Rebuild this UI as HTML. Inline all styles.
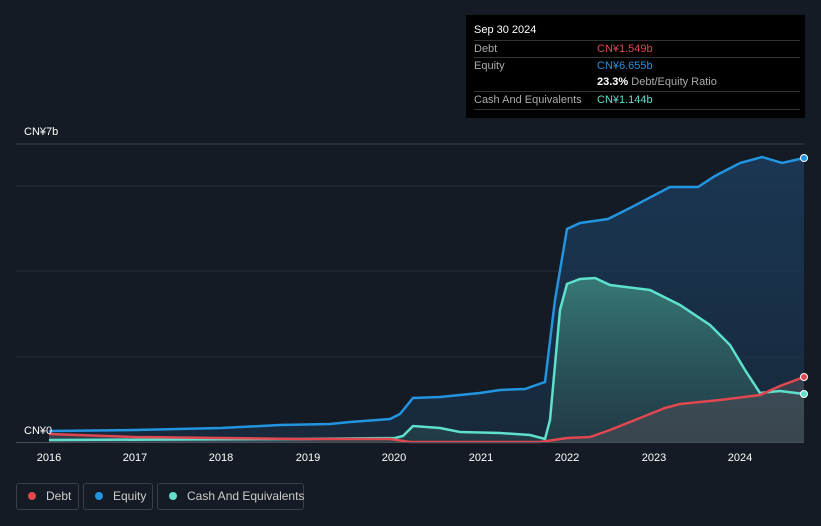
<!DOCTYPE html>
<html><head><style>
html,body{margin:0;width:821px;height:526px;background:#151b24;font-family:"Liberation Sans",sans-serif;overflow:hidden;position:relative}
.tt{position:absolute;left:466px;top:15px;width:339px;height:103px;background:#000;color:#fff;font-size:11px}
.row{position:absolute;left:8px;width:326px;border-top:1px solid #333;height:17px;line-height:17px}
.lg{position:absolute;top:483px;height:27px;border:1px solid #3a3f48;border-radius:3px;color:#ccc;font-size:12px;line-height:25px;box-sizing:border-box;white-space:nowrap}
.dot{display:inline-block;width:8px;height:8px;border-radius:50%;margin:0 10px 0 11px;vertical-align:0}
</style></head><body>
<svg width="821" height="526" style="position:absolute;left:0;top:0">
<defs>
<linearGradient id="ge" x1="0" y1="0" x2="0" y2="1"><stop offset="0" stop-color="#1b3d5e" stop-opacity=".8"/><stop offset="1" stop-color="#1b3d5e" stop-opacity=".4"/></linearGradient>
<linearGradient id="gc" x1="0" y1="0" x2="0" y2="1"><stop offset="0" stop-color="#3e8a80" stop-opacity=".8"/><stop offset="1" stop-color="#2a4c50" stop-opacity=".5"/></linearGradient>
</defs>
<line x1="16" y1="144" x2="804" y2="144" stroke="#3a3f48"/>
<line x1="16" y1="186" x2="804" y2="186" stroke="#262c36"/>
<line x1="16" y1="271" x2="804" y2="271" stroke="#262c36"/>
<line x1="16" y1="357" x2="804" y2="357" stroke="#262c36"/>
<path d="M49,431 L135,430 221,428 280,425 330,424 350,422 390,419 400,414 413,398 440,397 480,393 500,390 525,389 545,382 555,300 567,229 580,223 608,219 630,208 670,187 698,187 715,176 740,163 762,157 782,163 804,158 L804,442 49,442Z" fill="url(#ge)"/>
<path d="M49,440 L300,439 395,438 403,436 413,426 440,428 460,432 500,433 530,435 545,439 550,420 560,310 567,284 580,279 595,278 610,285 650,290 680,305 710,325 730,345 745,370 760,393 780,391 804,394 L804,442 49,442Z" fill="url(#gc)"/>
<path d="M49,434 L135,437 221,438 300,439 390,439 410,442 540,442 567,438 590,437 610,430 640,418 665,408 680,404 720,400 760,395 780,386 804,377 L804,442 49,442Z" fill="#4a4d57" fill-opacity=".6"/>
<path d="M49,431 L135,430 221,428 280,425 330,424 350,422 390,419 400,414 413,398 440,397 480,393 500,390 525,389 545,382 555,300 567,229 580,223 608,219 630,208 670,187 698,187 715,176 740,163 762,157 782,163 804,158" fill="none" stroke="#2394df" stroke-width="2.5"/>
<path d="M49,440 L300,439 395,438 403,436 413,426 440,428 460,432 500,433 530,435 545,439 550,420 560,310 567,284 580,279 595,278 610,285 650,290 680,305 710,325 730,345 745,370 760,393 780,391 804,394" fill="none" stroke="#5ee0cc" stroke-width="2.5"/>
<path d="M49,434 L135,437 221,438 300,439 390,439 410,442 540,442 567,438 590,437 610,430 640,418 665,408 680,404 720,400 760,395 780,386 804,377" fill="none" stroke="#e0474f" stroke-width="2.5"/>
<line x1="16" y1="442.5" x2="804" y2="442.5" stroke="#4a505a"/>
<circle cx="804" cy="158" r="3.5" fill="#2394df" stroke="#fff" stroke-width="1"/>
<circle cx="804" cy="394" r="3.5" fill="#5ee0cc" stroke="#fff" stroke-width="1"/>
<circle cx="804" cy="377" r="3.5" fill="#e0474f" stroke="#fff" stroke-width="1"/>
<g font-size="11" fill="#fff" font-family="Liberation Sans">
<text x="24" y="135">CN¥7b</text><text x="24" y="434">CN¥0</text>
<g text-anchor="middle"><text x="49" y="461">2016</text><text x="135" y="461">2017</text><text x="221" y="461">2018</text><text x="308" y="461">2019</text><text x="394" y="461">2020</text><text x="481" y="461">2021</text><text x="567" y="461">2022</text><text x="654" y="461">2023</text><text x="740" y="461">2024</text></g>
</g>
</svg>
<div class="tt">
<div style="position:absolute;left:8px;top:9px;font-size:11px">Sep 30 2024</div>
<div class="row" style="top:25px"><span style="color:#aaa">Debt</span><span style="position:absolute;left:123px;color:#e0474f">CN¥1.549b</span></div>
<div class="row" style="top:42px"><span style="color:#aaa">Equity</span><span style="position:absolute;left:123px;color:#2394df">CN¥6.655b</span></div>
<div style="position:absolute;left:131px;top:61px"><b>23.3%</b> <span style="color:#aaa">Debt/Equity Ratio</span></div>
<div class="row" style="top:76px;border-bottom:1px solid #333"><span style="color:#aaa">Cash And Equivalents</span><span style="position:absolute;left:123px;color:#5ee0cc">CN¥1.144b</span></div>
</div>
<div class="lg" style="left:16px;width:63px"><span class="dot" style="background:#e0474f"></span>Debt</div>
<div class="lg" style="left:83px;width:70px"><span class="dot" style="background:#2394df"></span>Equity</div>
<div class="lg" style="left:157px;width:147px"><span class="dot" style="background:#5ee0cc"></span>Cash And Equivalents</div>
</body></html>
